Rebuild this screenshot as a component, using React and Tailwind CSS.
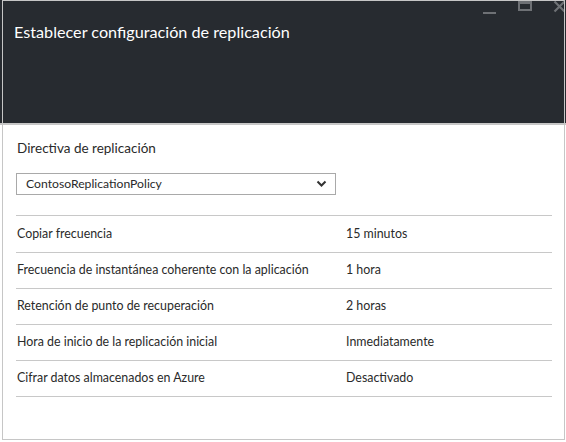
import React from 'react';

const rows = [
  ['Copiar frecuencia', '15 minutos'],
  ['Frecuencia de instantánea coherente con la aplicación', '1 hora'],
  ['Retención de punto de recuperación', '2 horas'],
  ['Hora de inicio de la replicación inicial', 'Inmediatamente'],
  ['Cifrar datos almacenados en Azure', 'Desactivado'],
];

export default function App() {
  return (
    <div className="w-[566px] h-[442px] bg-white relative overflow-hidden" style={{ fontFamily: 'Lato, "Open Sans", sans-serif' }}>
      <div className="absolute left-[2px] top-0 w-[563px] h-[440px] border border-[#c6c6c6] pointer-events-none z-10" />
      {/* header */}
      <div className="h-[125px] bg-[#272b30] border-b-2 border-[#c6c6c6] relative">
        <h1 className="pt-[21px] pl-[14px] text-[16.2px] leading-[22px] text-white font-normal">
          Establecer configuración de replicación
        </h1>
        <div className="absolute top-0 right-0 flex items-start">
          <div className="w-[13px] h-[2px] bg-[#6e7175] mt-[12px] mr-[22px]" />
          <div className="w-[14px] h-[10px] border-2 border-t-[3px] border-[#6e7175] mt-[1px] mr-[21px]" />
          <svg width="13" height="13" viewBox="0 0 13 13" className="mt-[0px]">
            <path d="M1.5 1.5 L11.5 11.5 M11.5 1.5 L1.5 11.5" stroke="#6e7175" strokeWidth="2.2" />
          </svg>
        </div>
      </div>

      <div className="pl-[16px] pr-[15px]">
        <div className="pt-[14px] pl-[1px] text-[13.5px] leading-[18px] text-[#2a2a2a]">Directiva de replicación</div>
        <div className="mt-[16px] w-[320px] h-[22px] border border-[#a9a9a9] flex items-center justify-between pl-[9px] pr-[8px] text-[12.2px] text-[#2a2a2a]">
          <span>ContosoReplicationPolicy</span>
          <svg width="11" height="8" viewBox="0 0 11 8">
            <path d="M1.5 1.5 L5.5 5.5 L9.5 1.5" fill="none" stroke="#333" strokeWidth="2" />
          </svg>
        </div>
        <div className="mt-[20px] w-[536px] border-t border-[#c8c8c8]">
          {rows.map(([k, v], i) => (
            <div key={k} className={`${i === 0 ? 'h-[37px]' : 'h-[36px]'} border-b border-[#c8c8c8] flex items-center text-[12.4px] text-[#2a2a2a]`}>
              <div className="w-[330px] pl-[1px]">{k}</div>
              <div>{v}</div>
            </div>
          ))}
        </div>
      </div>
    </div>
  );
}
